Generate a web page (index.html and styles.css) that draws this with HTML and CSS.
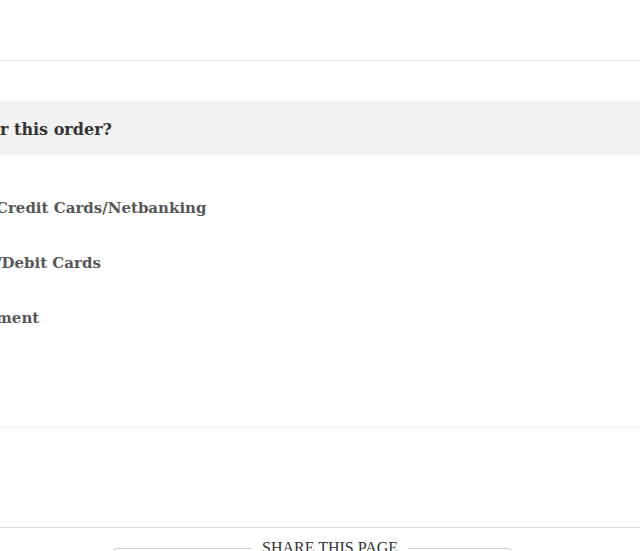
FILE: index.html
```html
<!DOCTYPE html>
<html>
<head>
<meta charset="utf-8">
<link rel="stylesheet" href="styles.css">
</head>
<body>
<div class="page">
  <header class="topbar"></header>
  <section class="payment">
    <h2 class="band"><span class="cut">How can I make the payment fo</span><span>r this order?</span></h2>
    <ul class="options">
      <li class="opt"><span class="cut">Wallets/Debit Cards/</span><span>Credit Cards/Netbanking</span></li>
      <li class="opt"><span class="cut">Credit</span><span>/Debit Cards</span></li>
      <li class="opt"><span class="cut">EMI Pay</span><span>ment</span></li>
    </ul>
  </section>
  <div class="spacer"></div>
  <footer class="share">
    <fieldset class="share-box">
      <legend class="share-title">SHARE THIS PAGE</legend>
    </fieldset>
  </footer>
</div>
</body>
</html>
```
FILE: styles.css
```css
html, body {
  margin: 0;
  padding: 0;
  background: #fff;
  overflow: hidden;
}
.page {
  width: 640px;
  height: 551px;
  overflow: hidden;
}
.topbar {
  height: 60px;
  border-bottom: 1px solid #e6e6e6;
}
.payment {
  padding-top: 40px;
  padding-bottom: 81px;
  border-bottom: 1px solid #efefef;
}
.band {
  margin: 0;
  height: 54px;
  padding-top: 2px;
  box-sizing: border-box;
  background: #f2f2f2;
  display: flex;
  align-items: center;
  font-family: "DejaVu Serif", serif;
  font-weight: bold;
  font-size: 16px;
  color: #333;
  white-space: nowrap;
}
.cut {
  flex: none;
  width: 480px;
  margin-left: -480px;
  text-align: right;
  overflow: hidden;
  white-space: nowrap;
}
.options {
  list-style: none;
  margin: 0;
  padding: 25px 0 0;
}
.opt {
  height: 55px;
  display: flex;
  align-items: center;
  font-family: "DejaVu Serif", serif;
  font-weight: bold;
  font-size: 15px;
  color: #575757;
  white-space: nowrap;
}
.opt .cut {
  margin-left: -484px;
}
.spacer {
  height: 100px;
  border-bottom: 1px solid #dedede;
}
.share {
  padding-top: 11px;
}
.share-box {
  margin: 0 0 0 113px;
  width: 399px;
  height: 40px;
  padding: 0;
  border: 1px solid #cfcfcf;
  border-radius: 4px;
  box-sizing: border-box;
}
.share-title {
  margin: 0 0 0 137px;
  padding: 0 10px 0 11px;
  font-family: "Liberation Serif", serif;
  font-size: 16px;
  color: #333;
}
```
